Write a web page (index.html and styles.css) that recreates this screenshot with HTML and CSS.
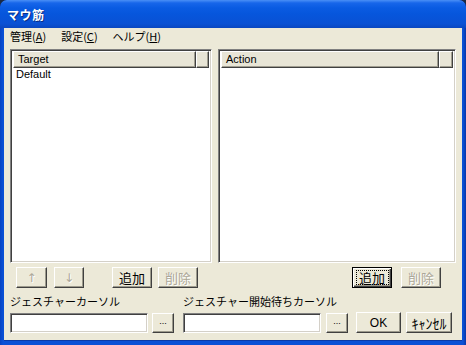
FILE: index.html
```html
<!DOCTYPE html>
<html lang="ja">
<head>
<meta charset="utf-8">
<title>マウ筋</title>
<link rel="stylesheet" href="styles.css">
</head>
<body>
<div class="window">
  <div class="titlebar"><span class="title">マウ筋</span></div>
  <div class="client">
    <div class="menubar">
      <span class="menu">管理(<u>A</u>)</span>
      <span class="menu">設定(<u>C</u>)</span>
      <span class="menu">ヘルプ(<u>H</u>)</span>
    </div>
    <div class="main">
      <div class="lists">
        <div class="col col-left">
          <div class="listbox">
            <div class="header">
              <div class="hcell hcell-target">Target</div>
              <div class="hcell hcell-fill"></div>
            </div>
            <div class="items">
              <div class="item">Default</div>
            </div>
          </div>
          <div class="btnrow btnrow-left">
            <button class="btn btn-arrow disabled">↑</button>
            <button class="btn btn-arrow btn-down disabled">↓</button>
            <button class="btn btn-small btn-add-left">追加</button>
            <button class="btn btn-small btn-del-left disabled">削除</button>
          </div>
        </div>
        <div class="col col-right">
          <div class="listbox">
            <div class="header">
              <div class="hcell hcell-action">Action</div>
              <div class="hcell hcell-fill"></div>
            </div>
            <div class="items"></div>
          </div>
          <div class="btnrow btnrow-right">
            <button class="btn btn-small focused"><span class="focus">追加</span></button>
            <button class="btn btn-small btn-del-right disabled">削除</button>
          </div>
        </div>
      </div>
      <div class="fields">
        <div class="field">
          <div class="label">ジェスチャーカーソル</div>
          <div class="fieldrow">
            <div class="input"></div>
            <button class="btn btn-dots">...</button>
          </div>
        </div>
        <div class="field field-second">
          <div class="label">ジェスチャー開始待ちカーソル</div>
          <div class="fieldrow">
            <div class="input"></div>
            <button class="btn btn-dots">...</button>
          </div>
        </div>
        <button class="btn btn-ok">OK</button>
        <button class="btn btn-cancel">ｷｬﾝｾﾙ</button>
      </div>
    </div>
  </div>
</div>
</body>
</html>
```

FILE: styles.css
```css
* { box-sizing: border-box; }
html, body {
  margin: 0;
  padding: 0;
  background: #1b2a44;
}
body {
  font-family: "Liberation Sans", "Noto Sans CJK JP", sans-serif;
  font-size: 11px;
  color: #000;
}
.window {
  width: 466px;
  height: 345px;
  border-radius: 7px 7px 0 0;
  background: linear-gradient(to right, #0843c2 0, #0a50d6 3px, #0a50d6 calc(100% - 3px), #0836a8 100%);
  padding: 0 4px 4px 4px;
  display: flex;
  flex-direction: column;
  overflow: hidden;
}
.titlebar {
  height: 28px;
  margin: 0 -4px;
  padding: 0 7px;
  display: flex;
  align-items: center;
  border-radius: 7px 7px 0 0;
  background: linear-gradient(to bottom, #4a8ff6 0, #1766ea 3px, #0a5be2 8px, #0656dc 50%, #0a51d4 85%, #0a47c0 100%);
}
.title {
  color: #fff;
  font-weight: bold;
  font-size: 12px;
  letter-spacing: 0.5px;
  font-family: "Noto Sans CJK JP", sans-serif;
  text-shadow: 1px 1px 0 #0a2f86;
  margin-top: 1px;
}
.client {
  flex: 1;
  background: #ece9d8;
  display: flex;
  flex-direction: column;
  border-bottom: 1px solid #0a3aa6;
}
.menubar {
  height: 19px;
  display: flex;
  align-items: center;
  padding-left: 6px;
  padding-bottom: 3px;
  gap: 15px;
}
.menu {
  font-family: "Noto Sans CJK JP", sans-serif;
  font-size: 11px;
  line-height: 14px;
}
.menu u { text-decoration: underline; text-underline-offset: 1px; }
.main {
  padding: 2px 6px 0 6px;
  display: flex;
  flex-direction: column;
}
.lists {
  display: flex;
  gap: 6px;
}
.col { display: flex; flex-direction: column; }
.col-left { width: 202px; }
.col-right { width: 238px; }
.listbox {
  height: 214px;
  background: #fff;
  border-top: 1px solid #808080;
  border-left: 1px solid #808080;
  border-right: 1px solid #fff;
  border-bottom: 1px solid #fff;
  box-shadow: inset 1px 1px 0 #404040, inset -1px -1px 0 #d4d0c8;
  padding: 1px 2px 2px 2px;
  display: flex;
  flex-direction: column;
}
.header {
  display: flex;
  height: 17px;
}
.hcell {
  background: #e8e5d6;
  border-top: 1px solid #fff;
  border-left: 1px solid #fff;
  border-right: 1px solid #404040;
  border-bottom: 1px solid #404040;
  box-shadow: inset -1px -1px 0 #a09d90;
  padding-left: 4px;
  line-height: 14px;
  font-size: 11px;
}
.hcell-target { width: 183px; }
.hcell-action { width: 218px; }
.hcell-fill { flex: 1; }
.items { padding: 0 0 0 3px; }
.item { line-height: 13px; }
.btnrow {
  display: flex;
  margin-top: 4px;
  height: 21px;
}
.btnrow-left { padding-left: 6px; }
.btnrow-right { justify-content: flex-end; padding-right: 15px; gap: 9px; }
.btn {
  font-family: "Noto Sans CJK JP", "Liberation Sans", sans-serif;
  font-size: 12px;
  background: #ece9d8;
  color: #000;
  margin: 0;
  padding: 0;
  height: 21px;
  border-top: 1px solid #fff;
  border-left: 1px solid #fff;
  border-right: 1px solid #404040;
  border-bottom: 1px solid #404040;
  box-shadow: inset -1px -1px 0 #9c9a8c;
  display: flex;
  align-items: center;
  justify-content: center;
  line-height: 14px;
}
.btn.disabled {
  color: #aca899;
  text-shadow: 1px 1px 0 #fff;
}
.btn-arrow { width: 31px; font-family: "DejaVu Sans", sans-serif; font-size: 12px; }
.btn-down { margin-left: 7px; width: 30px; }
.btn-small { width: 40px; font-size: 13px; }
.btn-add-left { margin-left: 28px; }
.btn-del-left { margin-left: 6px; }
.focused {
  border: 1px solid #000;
  box-shadow: inset 1px 1px 0 #fff, inset -1px -1px 0 #404040, inset -2px -2px 0 #9c9a8c;
}
.focus {
  border: 1px dotted #000;
  line-height: 12px;
  width: 33px;
  height: 15px;
  display: flex;
  align-items: center;
  justify-content: center;
}
.fields {
  display: flex;
  align-items: flex-end;
  margin-top: 6px;
}
.field { display: flex; flex-direction: column; }
.field-second { margin-left: 9px; }
.label {
  font-family: "Noto Sans CJK JP", sans-serif;
  font-size: 11px;
  line-height: 14px;
  height: 14px;
  margin-bottom: 5px;
  white-space: nowrap;
}
.fieldrow { display: flex; gap: 4px; }
.field-second .fieldrow { gap: 5px; }
.input {
  width: 138px;
  height: 20px;
  background: #fff;
  border-top: 1px solid #808080;
  border-left: 1px solid #808080;
  border-right: 1px solid #fff;
  border-bottom: 1px solid #fff;
  box-shadow: inset 1px 1px 0 #404040, inset -1px -1px 0 #d4d0c8;
}
.btn-dots {
  width: 22px;
  height: 20px;
  font-family: "Liberation Sans", sans-serif;
  font-size: 9px;
  align-items: flex-end;
  padding-bottom: 4px;
}
.btn-ok {
  width: 45px;
  height: 21px;
  margin-left: 8px;
  font-family: "Liberation Sans", sans-serif;
  font-size: 12px;
}
.btn-cancel {
  width: 46px;
  height: 21px;
  margin-left: 5px;
  white-space: nowrap;
  font-size: 14px;
}
```
